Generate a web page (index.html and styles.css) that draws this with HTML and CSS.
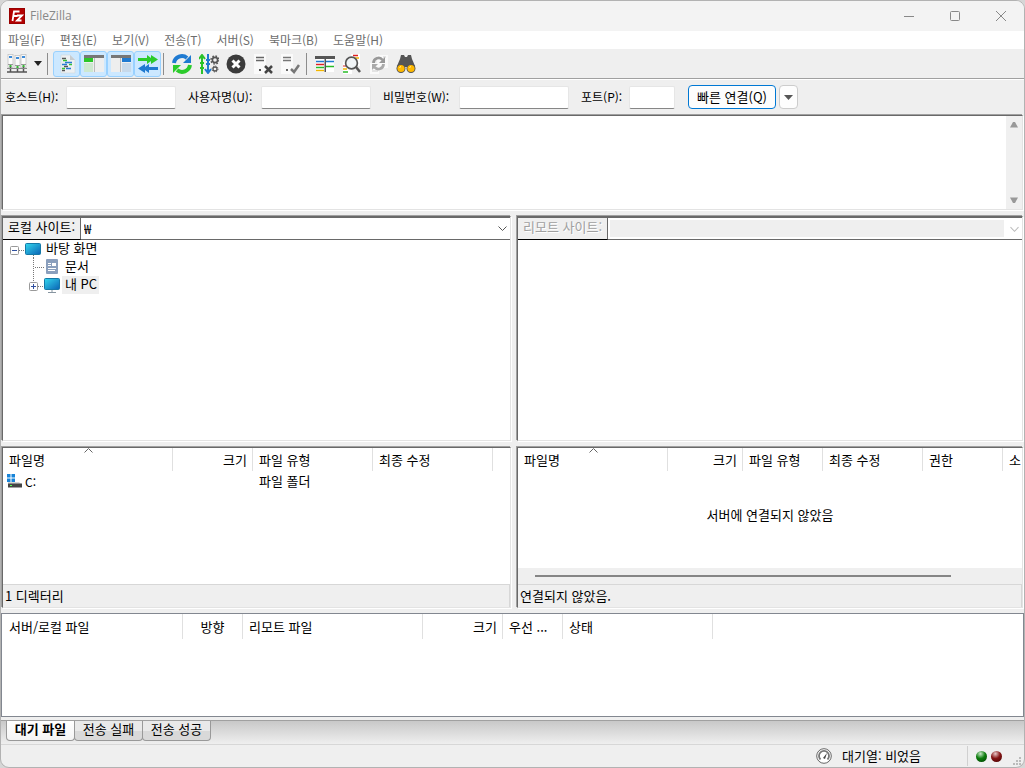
FILE: index.html
```
<!DOCTYPE html>
<html lang="ko">
<head>
<meta charset="utf-8">
<title>FileZilla</title>
<link rel="stylesheet" href="styles.css">
</head>
<body>
<div class="window">
  <header class="titlebar">
    <svg class="logo" width="16" height="16" viewBox="0 0 16 16"><rect width="16" height="16" fill="#b30000"/><rect x=".5" y=".5" width="15" height="15" fill="none" stroke="#7d0000" stroke-dasharray="1 1"/><path d="M3.500 13 5 3.500h5.500M4.500 8h4M8 7.500h5l-5 5h4.500" fill="none" stroke="#fff" stroke-width="1.800"/></svg>
    <h1 class="title">FileZilla</h1>
    <div class="caption-buttons">
      <button aria-label="최소화"><svg width="12" height="12"><path d="M1 6.500h10" stroke="#888"/></svg></button>
      <button aria-label="최대화"><svg width="12" height="12"><rect x="1.500" y="1.500" width="9" height="9" rx="1" fill="none" stroke="#888"/></svg></button>
      <button aria-label="닫기"><svg width="12" height="12"><path d="M1 1l10 10M11 1 1 11" stroke="#888"/></svg></button>
    </div>
  </header>

  <nav class="menubar">
    <button>파일(F)</button><button>편집(E)</button><button>보기(V)</button><button>전송(T)</button><button>서버(S)</button><button>북마크(B)</button><button>도움말(H)</button>
  </nav>

  <div class="toolbar">
    <button class="tool" aria-label="사이트 관리자"><svg width="22" height="22" viewBox="0 0 22 22"><g fill="#fbfbfb" stroke="#c4c4c4" stroke-width=".8"><rect x="2" y="1.500" width="5" height="13"/><rect x="9" y="2.500" width="5" height="13"/><rect x="15" y="1.500" width="5" height="13"/></g><path d="M3 4h3M10 5h3M16 4h3" stroke="#3e8bd8" stroke-width="2"/><path d="M2 11.500h5M9 12.500h5M15 11.500h5" stroke="#999"/><path d="M4.500 13v6M11.500 14v5M17.500 13v6M1 19h20" stroke="#555" stroke-width="1.500"/><path d="M1 15.500h20" stroke="#888"/><path d="M3.500 13h2M10.500 14h2M16.500 13h2" stroke="#33bb33" stroke-width="2"/></svg></button>
    <button class="tool-drop" aria-label="사이트 목록"><svg width="8" height="5"><path d="M0 0h8L4 5z" fill="#222"/></svg></button>
    <span class="separator"></span>
    <div class="toggles">
      <button class="tool on" aria-label="메시지 로그"><svg width="20" height="20" viewBox="0 0 20 20"><path d="M4 1h9l5 5v13H4z" fill="#edf0f2" stroke="#cfd6db" stroke-width=".6"/><path d="M13 1v5h5" fill="#c7ccd0"/><path d="M5 4.500h4M7 12.500h4M5 16.500h3" stroke="#555" stroke-width="1.500"/><path d="M6 6.500h4M12 10.500h3M5 14.500h3" stroke="#35c235" stroke-width="1.500"/><path d="M8 8.500h7M5 10.500h5M9 14.500h5" stroke="#297bd0" stroke-width="1.500"/></svg></button>
      <button class="tool on" aria-label="로컬 트리"><svg width="20" height="20" viewBox="0 0 20 20"><rect y="1" width="20" height="17" fill="#eee"/><path d="M0 1h20v3H0z" fill="#777"/><path d="M10 4h1v14h-1z" fill="#bbb"/><path d="M0 4h9v4H0z" fill="#2bc728"/><path d="M0 9h9v9H0z" fill="#cde8cf"/></svg></button>
      <button class="tool on" aria-label="원격 트리"><svg width="20" height="20" viewBox="0 0 20 20"><rect y="1" width="20" height="17" fill="#eee"/><path d="M0 1h20v3H0z" fill="#777"/><path d="M9 4h1v14H9z" fill="#bbb"/><path d="M11 4h9v4h-9z" fill="#1f7ad1"/><path d="M11 9h9v9h-9z" fill="#c7d9ea"/></svg></button>
      <button class="tool on" aria-label="전송 대기열"><svg width="20" height="20" viewBox="0 0 20 20"><path d="M0 4h9V1l4 3V1l7 4.500-7 4.500V7l-4 3V7H0z" fill="#2bcb2b"/><path d="M20 13h-9v-3l-4 3v-3l-7 4.500 7 4.500v-3l4 3v-3h9z" fill="#1f7ad1"/></svg></button>
    </div>
    <span class="separator near"></span>
    <button class="tool" aria-label="새로 고침"><svg width="20" height="20" viewBox="0 0 20 20"><path d="M2 9a8 8 0 0 1 13-5" fill="none" stroke="#1f7ad1" stroke-width="4"/><path d="M19 1v8h-8z" fill="#1f7ad1"/><path d="M18 11a8 8 0 0 1-13 5" fill="none" stroke="#2bcb2b" stroke-width="4"/><path d="M1 19v-8h8z" fill="#2bcb2b"/></svg></button>
    <button class="tool" aria-label="대기열 처리"><svg width="20" height="20" viewBox="0 0 20 20"><path d="M3 20V1M0 5l3-4 3 4M1 14h4M1 9h4" fill="none" stroke="#2bc22b" stroke-width="2"/><path d="M9 0v19M6 15l3 4 3-4M7 6h4M7 10h4" fill="none" stroke="#1f7ad1" stroke-width="2"/><circle cx="16" cy="6" r="2.600" fill="none" stroke="#555" stroke-width="1.600"/><circle cx="16" cy="6" r="4" fill="none" stroke="#555" stroke-width="1.500" stroke-dasharray="1.600 1.540"/><circle cx="16" cy="15" r="2" fill="none" stroke="#555" stroke-width="1.300"/><circle cx="16" cy="15" r="3" fill="none" stroke="#555" stroke-dasharray="1.200 1.150"/></svg></button>
    <button class="tool" aria-label="취소"><svg width="20" height="20" viewBox="0 0 20 20"><circle cx="10" cy="10" r="9.500" fill="#3b3b3b"/><path d="M6.500 6.500l7 7M13.500 6.500l-7 7" stroke="#fff" stroke-width="3"/></svg></button>
    <button class="tool" aria-label="연결 끊기"><svg width="20" height="20" viewBox="0 0 20 20"><path d="M1 0h12v20H1z" fill="#fafafa"/><path d="M3 3.500h8M3 6.500h8" stroke="#666" stroke-width="1.300"/><path d="M6 15h2v2H6z" fill="#555"/><path d="M12 12l7 7M19 12l-7 7" stroke="#444" stroke-width="2.500"/></svg></button>
    <button class="tool" aria-label="다시 연결"><svg width="20" height="20" viewBox="0 0 20 20"><path d="M1 0h12v20H1z" fill="#fafafa"/><path d="M3 3.500h8M3 6.500h8" stroke="#777" stroke-width="1.300"/><path d="M6 15h2v2H6z" fill="#666"/><path d="M11 15l3 3 5-7" fill="none" stroke="#777" stroke-width="2.500"/></svg></button>
    <span class="separator far"></span>
    <button class="tool" aria-label="필터"><svg width="20" height="20" viewBox="0 0 20 20"><path d="M1 2h18v16H1z" fill="#fff"/><path d="M0 2h20v3H0z" fill="#555"/><path d="M1 7.500h8M11 7.500h8" stroke="#1f7ad1" stroke-width="1.500"/><path d="M1 10.500h8" stroke="#d22" stroke-width="1.500"/><path d="M1 13.500h8M11 12.500h8" stroke="#28bb28" stroke-width="1.500"/><path d="M1 16.500h8" stroke="#f2b500" stroke-width="1.500"/><path d="M9.500 5h1.500v13H9.500z" fill="#555"/></svg></button>
    <button class="tool" aria-label="디렉터리 비교"><svg width="20" height="20" viewBox="0 0 20 20"><path d="M9 0h9v12H9zM1 8h9v12H1z" fill="#fff"/><path d="M11 1.500h5" stroke="#d22" stroke-width="1.500"/><path d="M13 4h4M1 15h4" stroke="#f2b500" stroke-width="1.500"/><path d="M1 18h5" stroke="#28bb28" stroke-width="1.500"/><path d="M1 12h3" stroke="#d22"/><circle cx="9.500" cy="9" r="5.900" fill="#edf2f5" fill-opacity=".8" stroke="#555" stroke-width="1.700"/><path d="M14 13l4 5" stroke="#555" stroke-width="2.500"/></svg></button>
    <button class="tool" aria-label="동기화 탐색"><svg width="20" height="20" viewBox="0 0 20 20"><path d="M8 1h11v13H8zM1 9h9v11H1z" fill="#fafafa"/><path d="M3 14h5M3 17h6M14 3h3" stroke="#ccc"/><path d="M4.500 9a5 5 0 0 1 9-3" fill="none" stroke="#999" stroke-width="2.800"/><path d="M16 3v6h-6z" fill="#999"/><path d="M14.500 10a5 5 0 0 1-9 3" fill="none" stroke="#aaa" stroke-width="2.800"/><path d="M3 16v-6h6z" fill="#aaa"/></svg></button>
    <button class="tool" aria-label="파일 찾기"><svg width="20" height="20" viewBox="0 0 20 20"><path d="M5 1h3l1 2h2l1-2h3l1 4 3 7-1 5h-6l-1-4H9l-1 4H2l-1-5 3-7z" fill="#555"/><circle cx="5" cy="14.500" r="4.500" fill="#555"/><circle cx="15" cy="14.500" r="4.500" fill="#555"/><circle cx="5" cy="14.500" r="3.600" fill="#ffb900"/><circle cx="15" cy="14.500" r="3.600" fill="#ffb900"/><path d="M3.500 13.500l1.500-1M13.500 13.500l1.500-1" stroke="#fff1b0"/></svg></button>
  </div>

  <form class="quickconnect">
    <label for="host">호스트(H):</label><input id="host" type="text">
    <label for="user">사용자명(U):</label><input id="user" type="text">
    <label for="pass">비밀번호(W):</label><input id="pass" type="password">
    <label for="port">포트(P):</label><input id="port" type="text">
    <button type="button" class="connect">빠른 연결(Q)</button>
    <button type="button" class="connect-drop" aria-label="최근 연결"><svg width="9" height="5"><path d="M0 0h9L4.500 5z" fill="#555"/></svg></button>
  </form>

  <section class="sunken log" aria-label="메시지 로그">
    <div class="log-text"></div>
    <div class="vscroll">
      <svg width="10" height="7"><path d="M1 6.500 4 1h2l3 5.500z" fill="#999"/></svg>
      <svg width="10" height="7"><path d="M1 .5 4 6h2L9 .5z" fill="#999"/></svg>
    </div>
  </section>

  <div class="split trees">
    <section class="sunken">
      <div class="pathbar">
        <label for="local">로컬 사이트:</label>
        <select id="local"><option>₩</option></select>
      </div>
      <ul class="tree">
        <li><svg width="40" height="18" viewBox="0 0 40 18"><defs><linearGradient id="screen" x1="0" y1="0" x2="1" y2="1"><stop offset="0" stop-color="#34d8ee"/><stop offset="1" stop-color="#0a63b5"/></linearGradient></defs><path d="M16 10.500h6M30.500 15v3" stroke="#777" stroke-dasharray="1 1"/><rect x="7.500" y="6.500" width="8" height="8" rx="1" fill="#fff" stroke="#999"/><path d="M9 10.500h5" stroke="#3050a0"/><rect x="22.500" y="3.500" width="15" height="11" rx="1" fill="url(#screen)" stroke="#1479a8"/></svg><span>바탕 화면</span></li>
        <li><svg width="59" height="18" viewBox="0 0 59 18"><path d="M30.500 0v18M32 9.500h9" stroke="#777" stroke-dasharray="1 1"/><rect x="43" y="1" width="12" height="15" rx="1" fill="#8a9fbd"/><path d="M45 5.500h3M45 7.500h3M45 10.500h8M45 12.500h7" stroke="#fff"/><rect x="49" y="5" width="4" height="3" fill="#fff"/></svg><span>문서</span></li>
        <li class="selected"><svg width="59" height="18" viewBox="0 0 59 18"><path d="M30.500 0v5M35 10.500h6" stroke="#777" stroke-dasharray="1 1"/><rect x="26.500" y="6.500" width="8" height="8" rx="1" fill="#fff" stroke="#999"/><path d="M28 10.500h5M30.500 8v5" stroke="#3050a0"/><rect x="41.500" y="2.500" width="15" height="11" rx="1" fill="url(#screen)" stroke="#1479a8"/><path d="M45 16.500h8M49 14v2" stroke="#8795a0"/></svg><span>내 PC</span></li>
      </ul>
    </section>
    <section class="sunken">
      <div class="pathbar disabled">
        <label for="remote">리모트 사이트:</label>
        <select id="remote" disabled></select>
      </div>
    </section>
  </div>

  <div class="split lists">
    <section class="sunken">
      <div class="list">
        <table>
          <colgroup><col class="w170"><col class="w80"><col class="w120"><col class="w120"><col></colgroup>
          <thead><tr><th class="sorted">파일명<svg class="sort" width="9" height="5"><path d="M.5 4.500l4-4 4 4" fill="none" stroke="#666"/></svg></th><th class="right">크기</th><th>파일 유형</th><th>최종 수정</th><th></th></tr></thead>
          <tbody><tr><td class="file"><svg width="16" height="16" viewBox="0 0 16 16"><path d="M1 8h11l3 3H1z" fill="#d5d5d5"/><path d="M1 9.500h14v4H1z" fill="#444"/><path d="M3 11.500h2" stroke="#5f5"/><path d="M0 0h3.500v3.500H0zM4.500 0H8v3.500H4.500zM0 4.500h3.500V8H0zM4.500 4.500H8V8H4.500z" fill="#1683d8"/></svg><span>C:</span></td><td></td><td>파일 폴더</td><td></td><td></td></tr></tbody>
        </table>
      </div>
      <p class="list-status">1 디렉터리</p>
    </section>
    <section class="sunken">
      <div class="list">
        <table>
          <colgroup><col class="w150"><col class="w75"><col class="w80"><col class="w100"><col class="w80"><col></colgroup>
          <thead><tr><th class="sorted">파일명<svg class="sort" width="9" height="5"><path d="M.5 4.500l4-4 4 4" fill="none" stroke="#666"/></svg></th><th class="right">크기</th><th>파일 유형</th><th>최종 수정</th><th>권한</th><th>소</th></tr></thead>
        </table>
        <p class="empty">서버에 연결되지 않았음</p>
        <div class="hscroll"><div class="thumb"></div></div>
      </div>
      <p class="list-status">연결되지 않았음.</p>
    </section>
  </div>

  <section class="queue">
    <table>
      <colgroup><col class="w181"><col class="w60"><col class="w180"><col class="w80"><col class="w60"><col class="w150"><col></colgroup>
      <thead><tr><th>서버/로컬 파일</th><th class="center">방향</th><th>리모트 파일</th><th class="right">크기</th><th>우선 ...</th><th>상태</th><th></th></tr></thead>
    </table>
  </section>

  <div class="tabs" role="tablist">
    <button role="tab" aria-selected="true" class="tab active">대기 파일</button>
    <button role="tab" class="tab">전송 실패</button>
    <button role="tab" class="tab">전송 성공</button>
  </div>

  <footer class="statusbar">
    <svg width="16" height="16" viewBox="0 0 16 16"><circle cx="8" cy="8" r="7.300" fill="#fff" stroke="#666"/><path d="M4.500 11.500a5 5 0 1 1 7 0" fill="none" stroke="#777" stroke-width="1.800"/><path d="M7 10l4-5-2 6z" fill="#444"/></svg>
    <span class="queue-state">대기열: 비었음</span>
    <span class="leds"><i class="led green"></i><i class="led red"></i></span>
    <svg class="grip" width="9" height="9"><path d="M6 0h2v2H6zM3 3h2v2H3zM6 3h2v2H6zM0 6h2v2H0zM3 6h2v2H3zM6 6h2v2H6z" fill="#bbb"/></svg>
  </footer>
</div>
</body>
</html>
```
FILE: styles.css
```
* { box-sizing: border-box; }
body {
  margin: 0;
  background: #d6d6d6;
  color: #000;
  font: 13px/18px "Noto Sans CJK KR", sans-serif;
}
button, input, select { font: inherit; color: inherit; }
button { padding: 0; border: 0; background: none; }
p, h1, ul { margin: 0; padding: 0; }
svg { display: block; flex: none; }

.window {
  display: flex;
  flex-direction: column;
  min-height: 100vh;
  overflow: hidden;
  border: 1px solid #b2b2b2;
  border-radius: 9px;
  background: #efefef;
}

.titlebar { display: flex; align-items: center; height: 30px; padding-left: 8px; background: #f3f3f3; }
.title { margin-left: 5px; font: 12px/18px "Open Sans", sans-serif; color: #888; }
.caption-buttons { display: flex; margin-left: auto; }
.caption-buttons button { display: grid; place-items: center; width: 46px; height: 28px; }

.menubar { display: flex; gap: 15px; height: 18px; padding-left: 7px; background: #fff; color: #6d6d6d; }
.menubar button { height: 18px; font-size: 12px; line-height: 18px; white-space: nowrap; }

.toolbar { display: flex; align-items: center; height: 30px; padding-left: 2px; border-bottom: 1px solid #a0a0a0; }
.tool { display: grid; place-items: center; width: 27px; height: 26px; }
.tool.on { border: 1px solid #99d1ff; border-radius: 3px; background: #cce8ff; }
.toggles { display: flex; }
.tool-drop { display: grid; place-items: center; width: 16px; height: 26px; }
.separator { width: 1px; height: 22px; margin: 0 5px 0 1px; background: #8c8c8c; }
.separator.near { margin: 0 4px 0 2px; }
.separator.far { margin: 0 4px 0 3px; }

.quickconnect {
  display: grid;
  grid-template-columns: 62px 110px 85px 110px 88px 110px 60px 46px 101px 35px;
  align-items: center;
  height: 35px;
  padding-left: 3px;
  border-top: 1px solid #fff;
}
.quickconnect label { padding-left: 12px; font-size: 12px; white-space: nowrap; }
.quickconnect label:first-child { padding-left: 1px; }
.quickconnect input { width: 100%; height: 23px; border: 1px solid #e6e6e6; border-bottom-color: #868686; border-radius: 2px; background: #fff; }
.connect { height: 24px; margin-left: 13px; width: 88px; border: 1px solid #0078d4; border-radius: 4px; background: #fdfdfd; }
.connect-drop { display: grid; place-items: center; width: 19px; height: 24px; margin-left: 3px; border: 1px solid #ccc; border-radius: 4px; background: #fdfdfd; }

.sunken {
  display: flex;
  flex-direction: column;
  min-width: 0;
  border: 1px solid;
  border-color: #696969 #e3e3e3 #e3e3e3 #696969;
  background: #fff;
  box-shadow: -1px -1px 0 #a0a0a0, 1px 1px 0 #fff;
}
.log { flex-direction: row; height: 95px; margin: 1px 1px 0; }
.log-text { flex: 1; }
.vscroll { display: flex; flex-direction: column; justify-content: space-between; align-items: center; width: 16px; padding: 5px 0; background: #f0f0f0; }

.split { display: grid; grid-template-columns: 509fr 506fr; gap: 6px; margin: 6px 1px 0; }
.trees { flex: 225 1 0; }
.lists { flex: 161 1 0; }

.pathbar { display: flex; height: 23px; border-top: 1px solid #696969; border-bottom: 1px solid #696969; }
.pathbar label { height: 22px; padding: 0 5px; border-right: 1px solid #696969; border-bottom: 1px solid #000; background: #efefef; line-height: 18px; white-space: nowrap; }
.pathbar select {
  flex: 1;
  min-width: 0;
  padding: 0 3px;
  border: 0;
  border-radius: 0;
  appearance: none;
  background: #fff url("data:image/svg+xml,%3Csvg xmlns='http://www.w3.org/2000/svg' width='9' height='6'%3E%3Cpath d='M.5 .5l4 4 4-4' fill='none' stroke='%23555'/%3E%3C/svg%3E") no-repeat right 3px center;
}
.pathbar.disabled label { color: #a0a0a0; text-shadow: 1px 1px 0 #fff; }
.pathbar.disabled select {
  opacity: 1;
  border: 2px solid #fff;
  border-right-width: 0;
  background: url("data:image/svg+xml,%3Csvg xmlns='http://www.w3.org/2000/svg' width='18' height='18'%3E%3Cpath d='M0 0h18v18H0z' fill='%23fff'/%3E%3Cpath d='M6.500 7.500l4 4 4-4' fill='none' stroke='%23bbb'/%3E%3C/svg%3E") no-repeat right center, #efefef;
}

.tree { list-style: none; }
.tree li { display: flex; align-items: center; height: 18px; }
.tree span { padding: 0 2px 0 3px; line-height: 16px; padding-bottom: 2px; }
.tree .selected span { background: #efefef; }

.list { display: flex; flex: 1; flex-direction: column; overflow: hidden; }
table { width: 100%; table-layout: fixed; border-collapse: separate; border-spacing: 0; }
th, td { padding: 0 6px; text-align: left; font-weight: 400; white-space: nowrap; }
th { height: 23px; border-right: 1px solid #e0e0e0; }
th:last-child { border-right: 0; }
td { height: 20px; }
.right { padding-right: 5px; text-align: right; }
.center { text-align: center; }
.sorted { position: relative; }
.sort { position: absolute; top: 0; left: calc(50% - 4px); }
.file { padding-left: 4px; }
.file svg, .file span { display: inline-block; vertical-align: middle; }
.file span { margin-left: 2px; font-size: 12px; }
.w60 { width: 60px; }
.w75 { width: 75px; }
.w80 { width: 80px; }
.w100 { width: 100px; }
.w120 { width: 120px; }
.w150 { width: 150px; }
.w170 { width: 170px; }
.w180 { width: 180px; }
.w181 { width: 181px; }
.empty { margin-top: 35px; text-align: center; }
.hscroll { height: 16px; margin-top: auto; padding: 7px 71px 0 17px; background: #efefef; }
.thumb { height: 2px; background: #858585; }
.list-status { height: 23px; padding-left: 2px; border-top: 1px solid #d7d7d7; border-right: 1px solid #d7d7d7; background: #efefef; line-height: 22px; }

.queue { flex: 102 1 0; margin-top: 5px; border: 1px solid #828790; background: #fff; }
.queue th { height: 25px; }
.queue th:first-child { padding-left: 7px; }

.tabs { display: flex; align-items: flex-start; height: 24px; margin-top: 3px; padding-left: 5px; border-top: 1px solid #a0a0a0; background: linear-gradient(#c8c8c8, #efefef); }
.tab { width: 69px; height: 20px; padding-bottom: 4px; border: 1px solid #999; border-top: 0; border-radius: 0 0 4px 4px; background: linear-gradient(#e9e9e9 50%, #d9d9d9 50%); line-height: 14px; white-space: nowrap; }
.tab + .tab { margin-left: -1px; }
.tab.active { background: linear-gradient(#fff, #f4f4f4); font-weight: 700; }

.statusbar { display: flex; align-items: center; height: 23px; border-top: 1px solid #d7d7d7; padding-right: 2px; }
.statusbar > svg:first-child { margin-left: auto; }
.queue-state { width: 135px; padding-left: 10px; }
.leds { display: flex; align-items: center; gap: 4px; width: 46px; height: 20px; padding-left: 8px; border-left: 1px solid #d0d0d0; }
.led { width: 11px; height: 11px; border-radius: 50%; }
.green { background: radial-gradient(circle at 40% 25%, #c8e8c8, #0c7c0c 45%, #003c00); }
.red { background: radial-gradient(circle at 40% 25%, #e8c8c8, #851414 45%, #400000); }
.grip { align-self: flex-end; margin-bottom: 1px; }
```
